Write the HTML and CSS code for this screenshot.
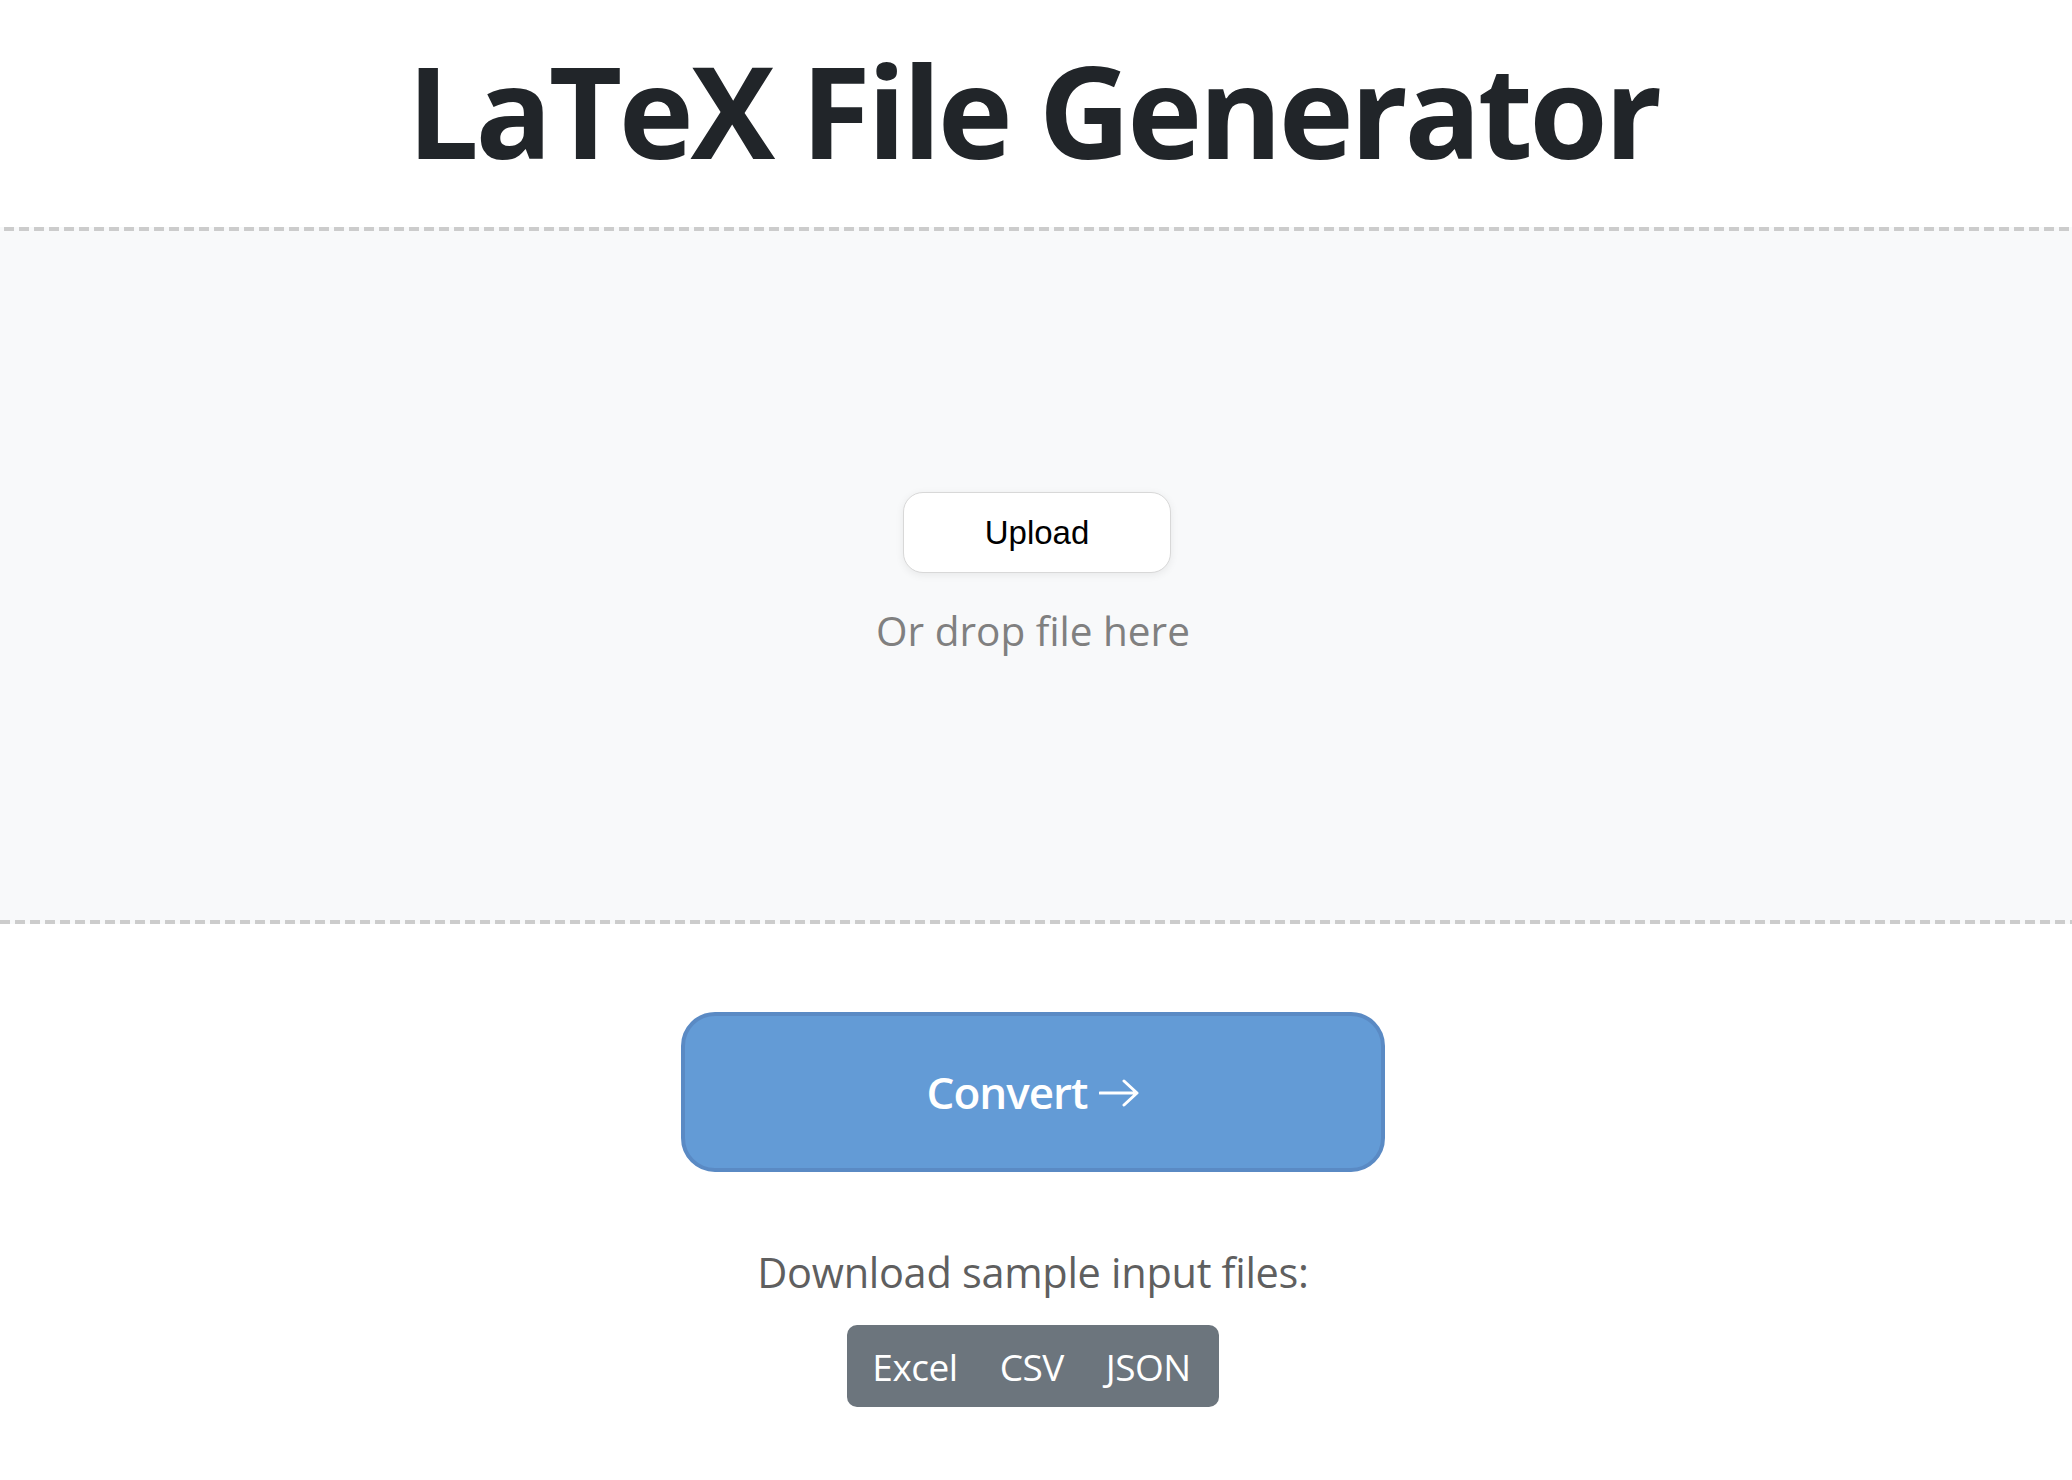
FILE: index.html
```html
<!DOCTYPE html>
<html lang="en">
<head>
<meta charset="utf-8">
<title>LaTeX File Generator</title>
<link rel="stylesheet" href="styles.css">
</head>
<body>
<main class="page">
  <h1 class="title">LaTeX File Generator</h1>
  <section class="dropzone">
    <button class="upload-btn" type="button">Upload</button>
    <p class="drop-hint">Or drop file here</p>
  </section>
  <button class="convert-btn" type="button">Convert <svg class="arrow" viewBox="0 0 40 30" width="40" height="30" aria-hidden="true"><path d="M1 15 H37 M25 3 L38 15 L25 27" fill="none" stroke="#ffffff" stroke-width="3" stroke-linecap="round" stroke-linejoin="round"/></svg></button>
  <p class="samples-label">Download sample input files:</p>
  <div class="btn-group">
    <a class="sample-btn" href="#">Excel</a>
    <a class="sample-btn" href="#">CSV</a>
    <a class="sample-btn" href="#">JSON</a>
  </div>
</main>
</body>
</html>
```
FILE: styles.css
```css
html, body {
  margin: 0;
  padding: 0;
  background: #ffffff;
}
body {
  font-family: "Open Sans", "Noto Sans", sans-serif;
  color: #212529;
}
.page {
  display: flex;
  flex-direction: column;
  align-items: center;
  padding-right: 6px;
}
.title {
  margin: 0;
  padding-top: 34px;
  font-size: 127px;
  line-height: 1.2;
  font-weight: 700;
  letter-spacing: -3.5px;
  color: #212529;
  text-align: center;
}
.dropzone {
  box-sizing: border-box;
  align-self: stretch;
  margin-top: 41px;
  margin-right: -6px;
  padding-right: 6px;
  height: 697px;
  display: flex;
  flex-direction: column;
  align-items: center;
  justify-content: center;
  background-color: #f8f9fa;
  background-image:
    repeating-linear-gradient(to right, #cccccc 0 10px, transparent 10px 15px),
    repeating-linear-gradient(to right, #cccccc 0 10px, transparent 10px 15px);
  background-size: 100% 4px, 100% 4px;
  background-position: 4px 0, 0 100%;
  background-repeat: no-repeat;
}
.upload-btn {
  box-sizing: border-box;
  width: 268px;
  height: 81px;
  margin-left: 8px;
  border: 1px solid #d8d8d8;
  border-radius: 20px;
  background: #ffffff;
  box-shadow: 0 2px 8px rgba(0, 0, 0, 0.07);
  font-family: "Liberation Sans", Arial, sans-serif;
  font-size: 33px;
  color: #000000;
  padding: 0;
}
.drop-hint {
  margin: 30px 0 0;
  font-size: 40.5px;
  line-height: 1.4;
  color: #808080;
}
.convert-btn {
  box-sizing: border-box;
  margin-top: 88px;
  width: 704px;
  height: 160px;
  border: 4px solid #5a8ac4;
  border-radius: 34px;
  background: #639bd6;
  color: #ffffff;
  font-family: "Open Sans", "Noto Sans", sans-serif;
  font-size: 44px;
  font-weight: 600;
  letter-spacing: -1px;
  padding: 0;
  display: flex;
  align-items: center;
  justify-content: center;
  gap: 12px;
}
.convert-btn .arrow {
  display: block;
  margin-top: 2px;
}
.samples-label {
  margin: 74px 0 0;
  font-size: 41.5px;
  line-height: 1.3;
  color: #5f5f5f;
  letter-spacing: -0.3px;
}
.btn-group {
  margin-top: 25px;
  display: flex;
  height: 82px;
  border-radius: 10px;
  background: #6c757d;
  padding: 0 7px 0 4px;
}
.sample-btn {
  display: flex;
  align-items: center;
  padding: 0 21px;
  color: #ffffff;
  text-decoration: none;
  font-size: 37px;
  letter-spacing: -0.5px;
}
```
